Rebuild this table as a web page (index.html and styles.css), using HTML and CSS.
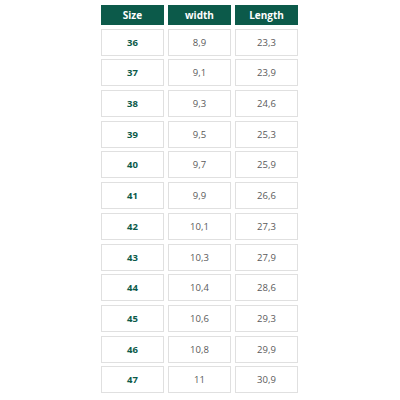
FILE: index.html
```html
<!DOCTYPE html>
<html>
<head>
<meta charset="utf-8">
<link rel="stylesheet" href="styles.css">
</head>
<body>
<div class="chart">
  <div class="hd">Size</div><div class="hd">width</div><div class="hd">Length</div>
  <div class="c sz">36</div><div class="c">8,9</div><div class="c">23,3</div>
  <div class="c sz">37</div><div class="c">9,1</div><div class="c">23,9</div>
  <div class="c sz">38</div><div class="c">9,3</div><div class="c">24,6</div>
  <div class="c sz">39</div><div class="c">9,5</div><div class="c">25,3</div>
  <div class="c sz">40</div><div class="c">9,7</div><div class="c">25,9</div>
  <div class="c sz">41</div><div class="c">9,9</div><div class="c">26,6</div>
  <div class="c sz">42</div><div class="c">10,1</div><div class="c">27,3</div>
  <div class="c sz">43</div><div class="c">10,3</div><div class="c">27,9</div>
  <div class="c sz">44</div><div class="c">10,4</div><div class="c">28,6</div>
  <div class="c sz">45</div><div class="c">10,6</div><div class="c">29,3</div>
  <div class="c sz">46</div><div class="c">10,8</div><div class="c">29,9</div>
  <div class="c sz">47</div><div class="c">11</div><div class="c">30,9</div>
</div>
</body>
</html>
```
FILE: styles.css
```css
html, body {
  margin: 0;
  padding: 0;
  background: #fff;
}
body {
  width: 400px;
  height: 400px;
  font-family: "Open Sans", "DejaVu Sans", sans-serif;
}
.chart {
  display: grid;
  grid-template-columns: 63px 63px 63px;
  grid-template-rows: 20px repeat(12, 27px);
  column-gap: 4px;
  row-gap: 3.7px;
  padding: 5px 0 0 101px;
}
.hd {
  background: #0c5a4a;
  color: #fff;
  font-weight: 700;
  font-size: 10px;
  display: flex;
  align-items: center;
  justify-content: center;
}
.c {
  border: 1px solid #e0e0e0;
  box-sizing: border-box;
  display: flex;
  align-items: center;
  justify-content: center;
  font-size: 9.5px;
  color: #5a5a5a;
}
.c.sz {
  color: #0c5a4a;
  font-weight: 700;
}
```
